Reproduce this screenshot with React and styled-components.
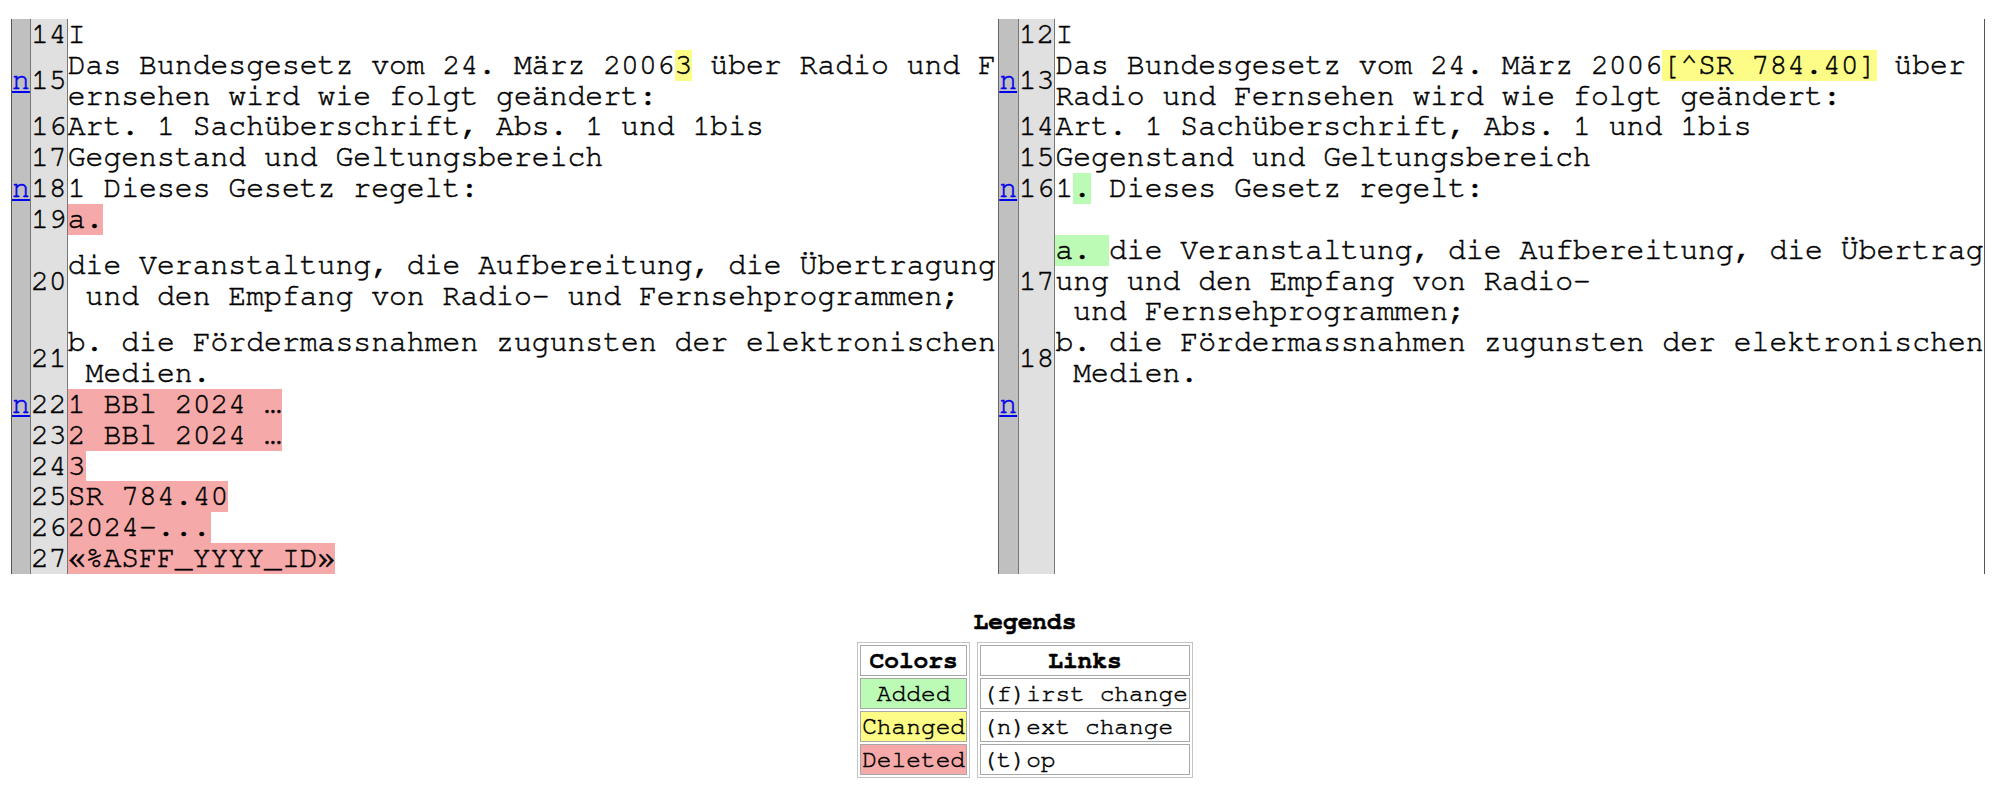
import React from 'react'
import styled, { createGlobalStyle } from 'styled-components'

const mono = `'Nimbus Mono PS', 'FreeMono', 'Liberation Mono', 'Courier New', monospace`

const GlobalStyle = createGlobalStyle`
  html, body {
    margin: 0;
    padding: 0;
    background: #fff;
  }
  body {
    font-family: ${mono};
    color: #000;
    -webkit-text-stroke: 0.5px currentColor;
  }
`

const marks = {
  add: '#bbfbb6',
  chg: '#fdfc87',
  sub: '#f5aaa9',
}

const Page = styled.div`
  padding: 19px 0 0 11px;
`

const DiffTable = styled.table`
  border-collapse: separate;
  border-spacing: 0;
  font-family: ${mono};
  font-size: 29.76px;
  line-height: 30.83px;
`

const NextCell = styled.td`
  box-sizing: content-box;
  width: ${p => p.w}px;
  padding: 0;
  background: #c0c0c0;
  border-right: 1px solid #777;
  ${p => p.first ? 'border-left: 1px solid #555;' : ''}
  text-align: center;
  vertical-align: middle;
`

const HeaderCell = styled.td`
  box-sizing: content-box;
  width: 35px;
  padding: 0;
  background: #e0e0e0;
  border-right: 1px solid #777;
  text-align: right;
  vertical-align: middle;
`

const TextCell = styled.td`
  box-sizing: content-box;
  width: ${p => p.w}px;
  padding: 0;
  border-right: 1px solid ${p => p.last ? '#555' : '#666'};
  white-space: pre;
  vertical-align: middle;
`

const NextLink = styled.a`
  color: #0000ee;
  text-decoration: underline;
`

const Mark = styled.span`
  display: inline-block;
  background: ${p => marks[p.kind]};
`

const LegendSection = styled.div`
  box-sizing: border-box;
  width: 1989px;
  margin-top: 34px;
  padding-left: 39px;
  display: flex;
  flex-direction: column;
  align-items: center;
  font-size: 24.5px;
`

const LegendTitle = styled.div`
  font-weight: bold;
  line-height: 28px;
`

const LegendRow = styled.div`
  display: flex;
  gap: 7px;
  margin-top: 6px;
  align-items: flex-start;
`

const LegendBox = styled.div`
  display: flex;
  flex-direction: column;
  gap: 2px;
  padding: 2px;
  border: 1px solid #c4c4c4;
`

const LegendCell = styled.div`
  border: 1px solid #a8a8a8;
  padding: 0 1px;
  line-height: 29px;
  white-space: pre;
  text-align: ${p => p.center ? 'center' : 'left'};
  font-weight: ${p => p.head ? 'bold' : 'normal'};
  background: ${p => p.kind ? marks[p.kind] : 'transparent'};
`

// each side: [next link?, line number, segments]
const rows = [
  [[false, 14, ['I']], [false, 12, ['I']]],
  [
    [true, 15, ['Das Bundesgesetz vom 24. März 2006', ['chg', '3'], ' über Radio und F\nernsehen wird wie folgt geändert:']],
    [true, 13, ['Das Bundesgesetz vom 24. März 2006', ['chg', '[^SR 784.40]'], ' über\nRadio und Fernsehen wird wie folgt geändert:']],
  ],
  [[false, 16, ['Art. 1 Sachüberschrift, Abs. 1 und 1bis']], [false, 14, ['Art. 1 Sachüberschrift, Abs. 1 und 1bis']]],
  [[false, 17, ['Gegenstand und Geltungsbereich']], [false, 15, ['Gegenstand und Geltungsbereich']]],
  [[true, 18, ['1 Dieses Gesetz regelt:']], [true, 16, ['1', ['add', '.'], ' Dieses Gesetz regelt:']]],
  [[false, 19, [['sub', 'a.']]], [false, '', []]],
  [
    [false, 20, ['die Veranstaltung, die Aufbereitung, die Übertragung\n und den Empfang von Radio- und Fernsehprogrammen;']],
    [false, 17, [['add', 'a. '], 'die Veranstaltung, die Aufbereitung, die Übertrag\nung und den Empfang von Radio-\n und Fernsehprogrammen;']],
  ],
  [
    [false, 21, ['b. die Fördermassnahmen zugunsten der elektronischen\n Medien.']],
    [false, 18, ['b. die Fördermassnahmen zugunsten der elektronischen\n Medien.']],
  ],
  [[true, 22, [['sub', '1 BBl 2024 …']]], [true, '', []]],
  [[false, 23, [['sub', '2 BBl 2024 …']]], [false, '', []]],
  [[false, 24, [['sub', '3']]], [false, '', []]],
  [[false, 25, [['sub', 'SR 784.40']]], [false, '', []]],
  [[false, 26, [['sub', '2024-...']]], [false, '', []]],
  [[false, 27, [['sub', '«%ASFF_YYYY_ID»']]], [false, '', []]],
]

const Segments = ({ parts }) =>
  parts.map((part, i) =>
    Array.isArray(part)
      ? <Mark key={i} kind={part[0]}>{part[1]}</Mark>
      : <React.Fragment key={i}>{part}</React.Fragment>
  )

const Side = ({ side, left }) => {
  const [next, no, parts] = side
  return (
    <>
      <NextCell w={left ? 18 : 19} first={left}>
        {next && <NextLink href="#">n</NextLink>}
      </NextCell>
      <HeaderCell>{no}</HeaderCell>
      <TextCell w={left ? 930 : 929} last={!left}>
        <Segments parts={parts} />
      </TextCell>
    </>
  )
}

export default function App() {
  return (
    <Page>
      <GlobalStyle />
      <DiffTable>
        <tbody>
          {rows.map((row, i) => (
            <tr key={i}>
              <Side side={row[0]} left />
              <Side side={row[1]} />
            </tr>
          ))}
        </tbody>
      </DiffTable>
      <LegendSection>
        <LegendTitle>Legends</LegendTitle>
        <LegendRow>
          <LegendBox>
            <LegendCell head center>Colors</LegendCell>
            <LegendCell center kind="add">{'\u00a0Added\u00a0'}</LegendCell>
            <LegendCell center kind="chg">Changed</LegendCell>
            <LegendCell center kind="sub">Deleted</LegendCell>
          </LegendBox>
          <LegendBox>
            <LegendCell head center>Links</LegendCell>
            <LegendCell>(f)irst change</LegendCell>
            <LegendCell>(n)ext change</LegendCell>
            <LegendCell>(t)op</LegendCell>
          </LegendBox>
        </LegendRow>
      </LegendSection>
    </Page>
  )
}
